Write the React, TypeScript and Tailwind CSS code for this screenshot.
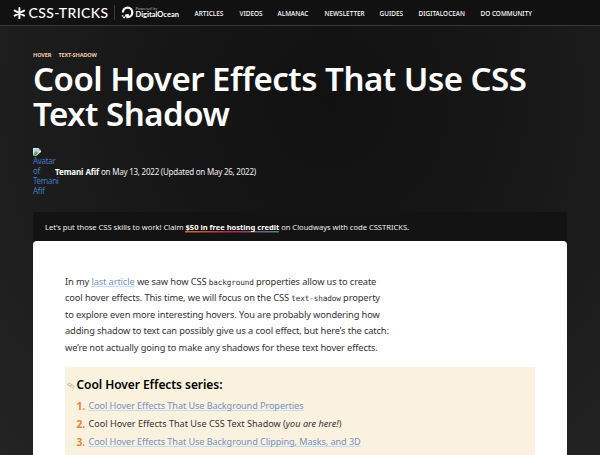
import React from "react";

const nav = [
  { label: "ARTICLES", cls: "w-[45px]" },
  { label: "VIDEOS", cls: "w-[38px]" },
  { label: "ALMANAC", cls: "w-[47px]" },
  { label: "NEWSLETTER", cls: "w-[55px]" },
  { label: "GUIDES", cls: "w-[39px]" },
  { label: "DIGITALOCEAN", cls: "w-[62px]" },
  { label: "DO COMMUNITY", cls: "w-[60px]" },
];

function Header() {
  return (
    <header className="flex h-[26px] items-center border-b border-[#383636] bg-[#111] pl-[13px] text-white">
      <svg className="h-[12px] w-[13px]" viewBox="0 0 13 12" stroke="#fff" strokeWidth="2" strokeLinecap="round">
        <path d="M6.4 1v10.2M1.7 3.6l9.4 5M11.1 3.6l-9.4 5" />
      </svg>
      <span className="ml-[2.5px] w-[80px] whitespace-nowrap font-['Lato'] text-[14px] font-medium leading-none tracking-[0.36px]">CSS-TRICKS</span>
      <span className="ml-[5px] h-[15px] w-px bg-[#3d3d3d]" />
      <svg className="ml-[6px] h-[13px] w-[13px]" viewBox="0 0 13 13">
        <path d="M1.9 6.4A4.7 4.7 0 1 1 6.6 11.1V8" fill="none" stroke="#fff" strokeWidth="2.3" />
        <path d="M4.1 8.4h2.3v2.3H4.1zM2.3 10.6h1.8v1.7H2.3zM.8 9.2h1.5v1.4H.8z" fill="#fff" />
      </svg>
      <span className="ml-[2px] flex w-[43px] flex-col whitespace-nowrap font-['Lato'] leading-none">
        <span className="text-[4.2px] leading-[5px] text-[#aaa]">Powered by</span>
        <span className="text-[7.5px] font-bold leading-[8px]">DigitalOcean</span>
      </span>
      <nav className="ml-[16px] flex whitespace-nowrap pt-[2px] text-[6.4px] font-medium tracking-[0.02px]">
        {nav.map((n) => (
          <a key={n.label} className={n.cls}>{n.label}</a>
        ))}
      </nav>
    </header>
  );
}

function BrokenImage() {
  return (
    <svg className="block h-[8px] w-[8px]" viewBox="0 0 8 8">
      <path d="M0 0h5.5L8 2.5V4L3 8H0z" fill="#e5eaf0" />
      <path d="M1 1h4v2l2 1-4 3H1z" fill="#b7cbea" />
      <path d="M0 7l3-4 2 2-3 3H0z" fill="#5da743" />
      <path d="M5.5 0v2.5H8z" fill="#8c8c8c" />
    </svg>
  );
}

function Link({ children }: { children: React.ReactNode }) {
  return <a className="text-[#7590c9] underline decoration-[#c6ddec] decoration-1 underline-offset-[1px] [text-decoration-skip-ink:none]">{children}</a>;
}

function Code({ children }: { children: React.ReactNode }) {
  return <code className="font-['DejaVu_Sans_Mono',monospace] text-[7.7px] leading-none">{children}</code>;
}

export default function App() {
  return (
    <div className="h-[455px] overflow-hidden bg-[radial-gradient(ellipse_at_55%_22%,#111_0%,#171717_40%,#242424_100%)] font-['Noto_Sans',sans-serif]">
      <Header />
      <main className="px-[33px]">
        <div className="flex h-[36px] gap-[7px] whitespace-nowrap pt-[25px] text-[5.6px] font-bold leading-[8px] tracking-[-0.14px] text-[#f5c9ae]">
          <span>HOVER</span>
          <span>TEXT-SHADOW</span>
        </div>
        <h1 className="whitespace-nowrap text-[33px] font-semibold leading-[34.5px] tracking-[-0.5px] text-white">
          Cool Hover Effects That Use CSS<br />Text Shadow
        </h1>
        <div className="mt-[16.5px] flex h-[64.5px] items-start whitespace-nowrap text-[8px] text-white">
          <div className="w-[22px] leading-[10.2px] tracking-[-0.3px] text-[#4478c4]">
            <BrokenImage />
            Avatar<br />of<br />Temani<br />Afif
          </div>
          <p className="pt-[18.5px] leading-[12px] tracking-[-0.23px] text-[#eee]"><b className="tracking-[-0.1px] text-white">Temani Afif</b> on May 13, 2022 (Updated on May 26, 2022)</p>
        </div>
        <div className="flex h-[29px] items-center whitespace-nowrap rounded-t-[3px] bg-[#131313] pl-[12px] text-[7.6px] tracking-[-0.02px] text-[#eee]">
          <p className="leading-[10px]">
            Let’s put those CSS skills to work! Claim{" "}
            <b className="bg-[linear-gradient(90deg,#d36b22,#b5244f,#48868b)] bg-[length:100%_1.5px] bg-bottom bg-no-repeat pb-[1px] text-white">$50 in free hosting credit</b>{" "}
            on Cloudways with code CSSTRICKS.
          </p>
        </div>
        <article className="h-[220px] rounded-t-[4px] bg-white px-[32px] pt-[33px] text-[#333]">
          <p className="h-[93px] whitespace-nowrap text-[9.3px] leading-[16.4px] tracking-[-0.13px]">
            In my <Link>last article</Link> we saw how CSS <Code>background</Code> properties allow us to create<br />
            cool hover effects. This time, we will focus on the CSS <Code>text-shadow</Code> property<br />
            to explore even more interesting hovers. You are probably wondering how<br />
            adding shadow to text can possibly give us a cool effect, but here’s the catch:<br />
            we’re not actually going to make any shadows for these text hover effects.
          </p>
          <section className="h-[100px] bg-[#fbf1df] pt-[10px]">
            <h2 className="flex h-[16px] items-center whitespace-nowrap text-[12px] font-semibold tracking-[-0.06px] text-black">
              <svg className="ml-[2px] mr-[1.5px] h-[7px] w-[8px]" viewBox="0 0 8 7" fill="none" stroke="#c5bcae" strokeWidth="0.9">
                <ellipse cx="2.6" cy="2.6" rx="2" ry="1.4" transform="rotate(20 2.6 2.6)" />
                <ellipse cx="5.2" cy="4.4" rx="2" ry="1.4" transform="rotate(20 5.2 4.4)" />
              </svg>
              Cool Hover Effects series:
            </h2>
            <ol className="mt-[7px] whitespace-nowrap pl-[11.5px] text-[9.1px] leading-[12px] tracking-[-0.07px]">
              <li className="flex h-[17.8px]"><b className="w-[12px] text-[10.3px] text-[#e58538]">1.</b><span><Link>Cool Hover Effects That Use Background Properties</Link></span></li>
              <li className="flex h-[17.8px]"><b className="w-[12px] text-[10.3px] text-[#e58538]">2.</b><span className="tracking-[0.01px]">Cool Hover Effects That Use CSS Text Shadow (<i>you are here!</i>)</span></li>
              <li className="flex h-[17.8px]"><b className="w-[12px] text-[10.3px] text-[#e58538]">3.</b><span><Link>Cool Hover Effects That Use Background Clipping, Masks, and 3D</Link></span></li>
            </ol>
          </section>
        </article>
      </main>
    </div>
  );
}
